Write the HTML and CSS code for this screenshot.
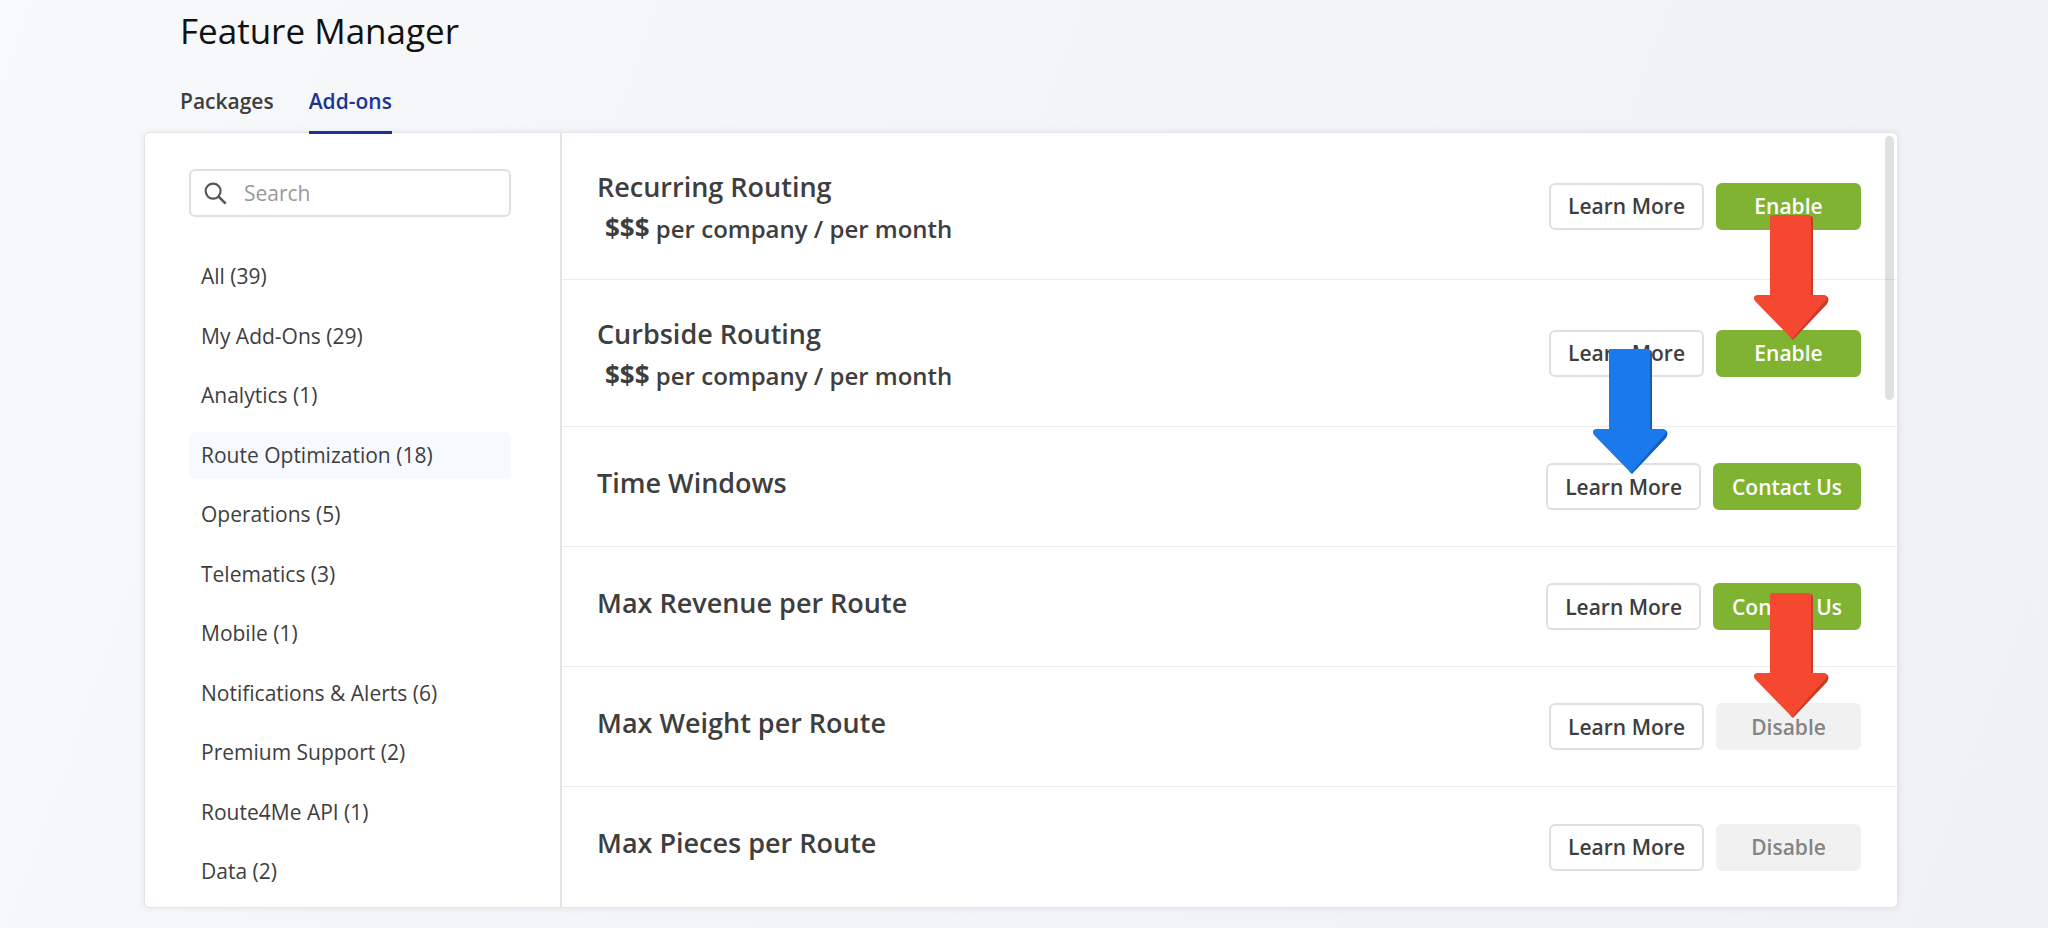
FILE: index.html
```
<!DOCTYPE html>
<html lang="en">
  <head>
    <meta charset="UTF-8" />
    <meta name="viewport" content="width=device-width, initial-scale=1.0" />
    <title>Feature Manager</title>
    <link rel="stylesheet" href="styles.css">
  </head>
  <body>
    <div class="page">
      <h1>Feature Manager</h1>
      <nav class="tabs">
        <a href="#packages" class="tab">Packages</a>
        <a href="#addons" class="tab active">Add-ons</a>
      </nav>

      <main class="panel">
        <aside class="sidebar">
          <label class="search">
            <svg class="search-icon" viewBox="0 0 24 24" aria-hidden="true">
              <circle cx="9.5" cy="9.5" r="7.8" fill="none" stroke="#555" stroke-width="2.2" />
              <path d="M15 15L22.6 22.6" stroke="#555" stroke-width="2.8" />
            </svg>
            <input type="text" placeholder="Search" aria-label="Search" />
          </label>
          <ul class="categories">
            <li><a href="#all">All (39)</a></li>
            <li><a href="#my-addons">My Add-Ons (29)</a></li>
            <li><a href="#analytics">Analytics (1)</a></li>
            <li><a href="#route-optimization" class="selected">Route Optimization (18)</a></li>
            <li><a href="#operations">Operations (5)</a></li>
            <li><a href="#telematics">Telematics (3)</a></li>
            <li><a href="#mobile">Mobile (1)</a></li>
            <li><a href="#notifications">Notifications &amp; Alerts (6)</a></li>
            <li><a href="#support">Premium Support (2)</a></li>
            <li><a href="#api">Route4Me API (1)</a></li>
            <li><a href="#data">Data (2)</a></li>
          </ul>
        </aside>

        <section class="addons">
          <div class="addon priced">
            <div class="info">
              <h2>Recurring Routing</h2>
              <p class="price"><b>$$$</b> per company / per month</p>
            </div>
            <button class="btn">Learn More</button>
            <button class="btn green">Enable</button>
          </div>
          <div class="addon priced">
            <div class="info">
              <h2>Curbside Routing</h2>
              <p class="price"><b>$$$</b> per company / per month</p>
            </div>
            <button class="btn">Learn More</button>
            <button class="btn green">Enable</button>
          </div>
          <div class="addon">
            <div class="info">
              <h2>Time Windows</h2>
            </div>
            <button class="btn">Learn More</button>
            <button class="btn green">Contact Us</button>
          </div>
          <div class="addon">
            <div class="info">
              <h2>Max Revenue per Route</h2>
            </div>
            <button class="btn">Learn More</button>
            <button class="btn green">Contact Us</button>
          </div>
          <div class="addon">
            <div class="info">
              <h2>Max Weight per Route</h2>
            </div>
            <button class="btn">Learn More</button>
            <button class="btn gray">Disable</button>
          </div>
          <div class="addon">
            <div class="info">
              <h2>Max Pieces per Route</h2>
            </div>
            <button class="btn">Learn More</button>
            <button class="btn gray">Disable</button>
          </div>
        </section>

        <div class="scrollbar"></div>

        <!-- Pointer arrows -->
        <svg class="arrow red first" viewBox="0 0 75 126" aria-hidden="true">
          <path class="side" d="M17 1H56Q59 1 59 4V80H70Q77 82 73 89L39 125L36 122Z" />
          <path class="face" d="M16 2Q16 0 18 0H54Q57 0 57 3V80H69Q75 81 72 85L38 124L1 86Q-2 81 3 80H16Z" />
        </svg>
        <svg class="arrow blue" viewBox="0 0 75 126" aria-hidden="true">
          <path class="side" d="M17 1H56Q59 1 59 4V80H70Q77 82 73 89L39 125L36 122Z" />
          <path class="face" d="M16 2Q16 0 18 0H54Q57 0 57 3V80H69Q75 81 72 85L38 124L1 86Q-2 81 3 80H16Z" />
        </svg>
        <svg class="arrow red second" viewBox="0 0 75 126" aria-hidden="true">
          <path class="side" d="M17 1H56Q59 1 59 4V80H70Q77 82 73 89L39 125L36 122Z" />
          <path class="face" d="M16 2Q16 0 18 0H54Q57 0 57 3V80H69Q75 81 72 85L38 124L1 86Q-2 81 3 80H16Z" />
        </svg>
      </main>
    </div>
  </body>
</html>
```
FILE: styles.css
```
* {
  box-sizing: border-box;
}
body {
  margin: 0;
  min-height: 100vh;
  background: linear-gradient(110deg, #f8f9fa 0%, #f4f5f9 35%, #f0f1f7 100%);
  color: #3e3e3e;
  font-family: "Open Sans", sans-serif;
  font-size: 21px;
}
a {
  color: inherit;
  text-decoration: none;
}
.page {
  padding: 7px 150px 20px 144px;
}
h1 {
  margin: 0 0 24px 36px;
  color: #111;
  font-size: 35px;
  font-weight: 400;
  line-height: 48px;
}
.tabs {
  position: relative;
  z-index: 1;
  display: flex;
  gap: 35px;
  margin-left: 36px;
}
.tab {
  height: 55px;
  line-height: 45px;
  font-weight: 600;
}
.tab.active {
  color: #1c3394;
  border-bottom: 3px solid #1c3394;
  border-radius: 3px 3px 0 0;
}

.panel {
  position: relative;
  display: flex;
  margin-top: -2px;
  background-color: #fff;
  border: 1px solid #e4e5e8;
  border-radius: 6px;
  box-shadow: 0 0 6px rgba(40, 50, 80, 0.1);
}
.sidebar {
  display: flex;
  flex-direction: column;
  flex: 0 0 415px;
  padding: 36px 49px 12px 44px;
  border-right: 2px solid #e2e3e4;
}
.search {
  display: flex;
  align-items: center;
  height: 48px;
  padding-left: 13px;
  border: 2px solid #e0e0e0;
  border-radius: 6px;
}
.search-icon {
  flex: none;
  width: 23px;
  height: 23px;
}
.search input {
  flex: 1;
  min-width: 0;
  margin-left: 17px;
  padding: 0;
  border: none;
  outline: none;
  background: transparent;
  color: #3e3e3e;
  font: inherit;
}
.search input::placeholder {
  color: #999;
}
.categories {
  display: flex;
  flex: 1;
  flex-direction: column;
  justify-content: space-between;
  margin: 36px 0 0;
  padding: 0;
  list-style: none;
}
.categories a {
  display: block;
  padding: 0 12px;
  border-radius: 6px;
  line-height: 47px;
}
.categories a.selected {
  background-color: #f6f9fe;
}

.addons {
  flex: 1;
}
.addon {
  display: flex;
  align-items: center;
  gap: 12px;
  height: 120px;
  padding: 0 36px 0 35px;
  border-bottom: 1px solid #ececee;
}
.addon.priced {
  height: 147px;
}
.addon:last-child {
  border-bottom: none;
}
.info {
  flex: 1;
  padding-bottom: 8px;
}
.priced .info {
  padding: 4px 0 0;
}
h2 {
  margin: 0;
  font-size: 27px;
  font-weight: 600;
  line-height: 40px;
}
.price {
  margin: 0 0 0 8px;
  font-size: 24px;
  font-weight: 600;
  line-height: 42px;
}
.price b {
  font-size: 26px;
  font-weight: 700;
}
.btn {
  height: 47px;
  min-width: 145px;
  padding: 0 17px;
  background-color: #fff;
  color: #3e3e3e;
  border: 2px solid #e0e0e2;
  border-radius: 6px;
  font: inherit;
  font-weight: 600;
  cursor: pointer;
}
.btn.green {
  background-color: #80b332;
  border-color: #80b332;
  color: #fff;
}
.btn.gray {
  background-color: #f1f1f1;
  border-color: #f1f1f1;
  color: #848484;
}

.scrollbar {
  position: absolute;
  top: 3px;
  right: 3px;
  width: 9px;
  height: 264px;
  border-radius: 5px;
  background-color: rgba(140, 142, 142, 0.28);
}

/* Arrows lie over the buttons */
.arrow {
  position: absolute;
  width: 75px;
  height: 126px;
}
.arrow.first {
  top: 82px;
  right: 68px;
}
.arrow.blue {
  top: 216px;
  right: 229px;
}
.arrow.second {
  top: 460px;
  right: 68px;
}
.red .face {
  fill: #f44830;
}
.red .side {
  fill: #c63c28;
}
.blue .face {
  fill: #1a7aec;
}
.blue .side {
  fill: #155fb8;
}
```
